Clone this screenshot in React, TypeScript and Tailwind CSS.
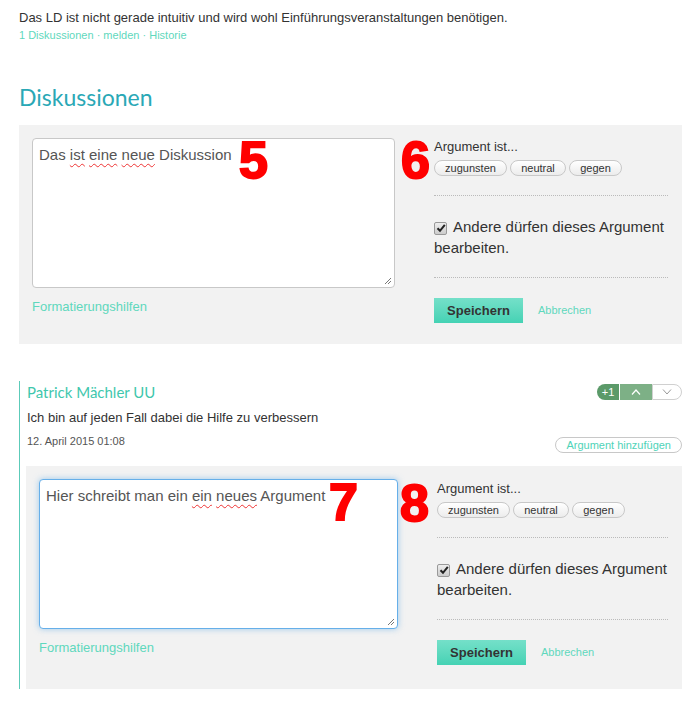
import React from "react";

const sans = "font-['Liberation_Sans',Arial,sans-serif]";

function Grip() {
  return (
    <svg className="absolute bottom-[2px] right-[2px]" width="9" height="9" viewBox="0 0 9 9">
      <path d="M8 2 L2 8 M8 5 L5 8" stroke="#777" strokeWidth="1" />
    </svg>
  );
}

function Marker({ n, className }: { n: string; className: string }) {
  return (
    <span
      className={`absolute ${className} font-['Liberation_Sans',Arial,sans-serif] text-[52px] font-bold leading-none text-[#ff0000] [-webkit-text-stroke:2px_#ff0000]`}
    >
      {n}
    </span>
  );
}

function Wavy({ children }: { children: React.ReactNode }) {
  return <span className="underline decoration-wavy decoration-[#e33] decoration-1 underline-offset-[3px]">{children}</span>;
}

function Checkbox() {
  return (
    <span className="relative mr-[6px] inline-flex h-[13px] w-[13px] translate-y-[1px] items-center justify-center rounded-[2px] border border-[#999] bg-gradient-to-b from-[#eee] to-[#ccc] align-baseline">
      <svg width="10" height="10" viewBox="0 0 10 10">
        <path d="M1.5 5.2 L4 7.8 L8.8 1.8" stroke="#222" strokeWidth="2" fill="none" />
      </svg>
    </span>
  );
}

function Options({ width, top }: { width: string; top: string }) {
  return (
    <div className={`${width} ${top} shrink-0 ${sans} text-[#333]`}>
      <div className="text-[13px] leading-[18px]">Argument ist...</div>
      <div className="mt-[4px] flex gap-[3px]">
        {[
          ["zugunsten", "w-[73px]"],
          ["neutral", "w-[56px]"],
          ["gegen", "w-[53px]"],
        ].map(([t, w]) => (
          <span
            key={t}
            className={`${w} flex h-[16px] items-center justify-center rounded-full border border-[#c8c8c8] bg-gradient-to-b from-white to-[#ececec] text-[11px] text-[#333]`}
          >
            {t}
          </span>
        ))}
      </div>
      <div className="mt-[19px] border-t border-dotted border-[#bbb]" />
      <div className="mt-[20px] text-[15px] leading-[21px]">
        <Checkbox />
        Andere dürfen dieses Argument bearbeiten.
      </div>
      <div className="mt-[19px] border-t border-dotted border-[#bbb]" />
      <div className="mt-[20px] flex items-center">
        <button className="h-[25px] w-[89px] bg-gradient-to-b from-[#74e0c9] to-[#44d2b4] text-[13px] font-bold text-[#333]">
          Speichern
        </button>
        <span className="ml-[15px] text-[11px] text-[#5fd8bd]">Abbrechen</span>
      </div>
    </div>
  );
}

export default function App() {
  return (
    <div className={`min-h-[727px] bg-white pl-[19px] pr-[10px] pt-[9px] ${sans} text-[#333]`}>
      <p className="text-[13px] leading-[18px]">
        Das LD ist nicht gerade intuitiv und wird wohl Einführungsveranstaltungen benötigen.
      </p>
      <p className="text-[11px] leading-[16px] text-[#5fd8bd]">1 Diskussionen · melden · Historie</p>

      <h2 className="mt-[39px] font-['Lato',sans-serif] text-[23px] leading-[30px] text-[#2aa8b6]">Diskussionen</h2>

      {/* neue Diskussion */}
      <div className="relative mt-[13px] flex gap-[39px] bg-[#f2f2f2] pb-[21px] pl-[13px] pr-[14px] pt-[13px]">
        <div className="w-[363px] shrink-0">
          <div className="relative h-[150px] rounded-[4px] border border-[#c8c8c8] bg-white px-[6px] pt-[5px] text-[15px] leading-[21px] text-[#555]">
            Das <Wavy>ist</Wavy> <Wavy>eine</Wavy> <Wavy>neue</Wavy> Diskussion
            <Grip />
          </div>
          <div className="mt-[10px] text-[13px] leading-[18px] text-[#5fd8bd]">Formatierungshilfen</div>
        </div>
        <Options width="w-[234px]" top="mt-0" />
        <Marker n="5" className="left-[220px] top-[9px]" />
        <Marker n="6" className="left-[382px] top-[9px]" />
      </div>

      {/* Beitrag */}
      <div className="mt-[37px] border-l border-[#5ccbb9] pl-[6px]">
        <div className="flex items-center justify-between pt-[1px]">
          <span className="pl-[1px] font-['Lato',sans-serif] text-[15px] leading-[20px] text-[#3fc7ad]">
            Patrick Mächler UU
          </span>
          <div className="flex h-[16px] text-[11px]">
            <span className="flex w-[22px] items-center justify-center rounded-l-full bg-[#5b9a69] text-white">+1</span>
            <span className="ml-[1px] flex w-[32px] items-center justify-center bg-[#7db086]">
              <svg width="10" height="6" viewBox="0 0 10 6">
                <path d="M1 5.5 L5 1 L9 5.5" stroke="white" strokeWidth="1.2" fill="none" />
              </svg>
            </span>
            <span className="flex w-[30px] items-center justify-center rounded-r-full border border-[#d0d0d0] bg-white">
              <svg width="10" height="6" viewBox="0 0 10 6">
                <path d="M1 0.5 L5 5 L9 0.5" stroke="#999" strokeWidth="1" fill="none" />
              </svg>
            </span>
          </div>
        </div>
        <p className="mt-[6px] pl-[1px] text-[13px] leading-[20px]">
          Ich bin auf jeden Fall dabei die Hilfe zu verbessern
        </p>
        <div className="mt-[5px] flex h-[20px] justify-between">
          <span className="self-start pl-[1px] text-[11px] leading-[16px] text-[#555]">12. April 2015 01:08</span>
          <span className="flex h-[16px] items-center self-end rounded-full border border-[#c8c8c8] bg-white px-[10px] text-[11px] text-[#4fd3b8]">
            Argument hinzufügen
          </span>
        </div>

        <div className="relative mt-[13px] flex gap-[39px] bg-[#f2f2f2] pb-[24px] pl-[13px] pr-[14px] pt-[13px]">
          <div className="w-[359px] shrink-0">
            <div className="relative h-[150px] rounded-[4px] border border-[#66afe9] bg-white px-[6px] pt-[5px] text-[15px] leading-[21px] text-[#555] shadow-[0_0_6px_rgba(102,175,233,0.6)]">
              Hier schreibt man ein <Wavy>ein</Wavy> <Wavy>neues</Wavy> Argument
              <Grip />
            </div>
            <div className="mt-[10px] text-[13px] leading-[18px] text-[#5fd8bd]">Formatierungshilfen</div>
          </div>
          <Options width="w-[231px]" top="mt-[1px]" />
          <Marker n="7" className="left-[303px] top-[10px]" />
          <Marker n="8" className="left-[374px] top-[11px]" />
        </div>
      </div>
    </div>
  );
}
